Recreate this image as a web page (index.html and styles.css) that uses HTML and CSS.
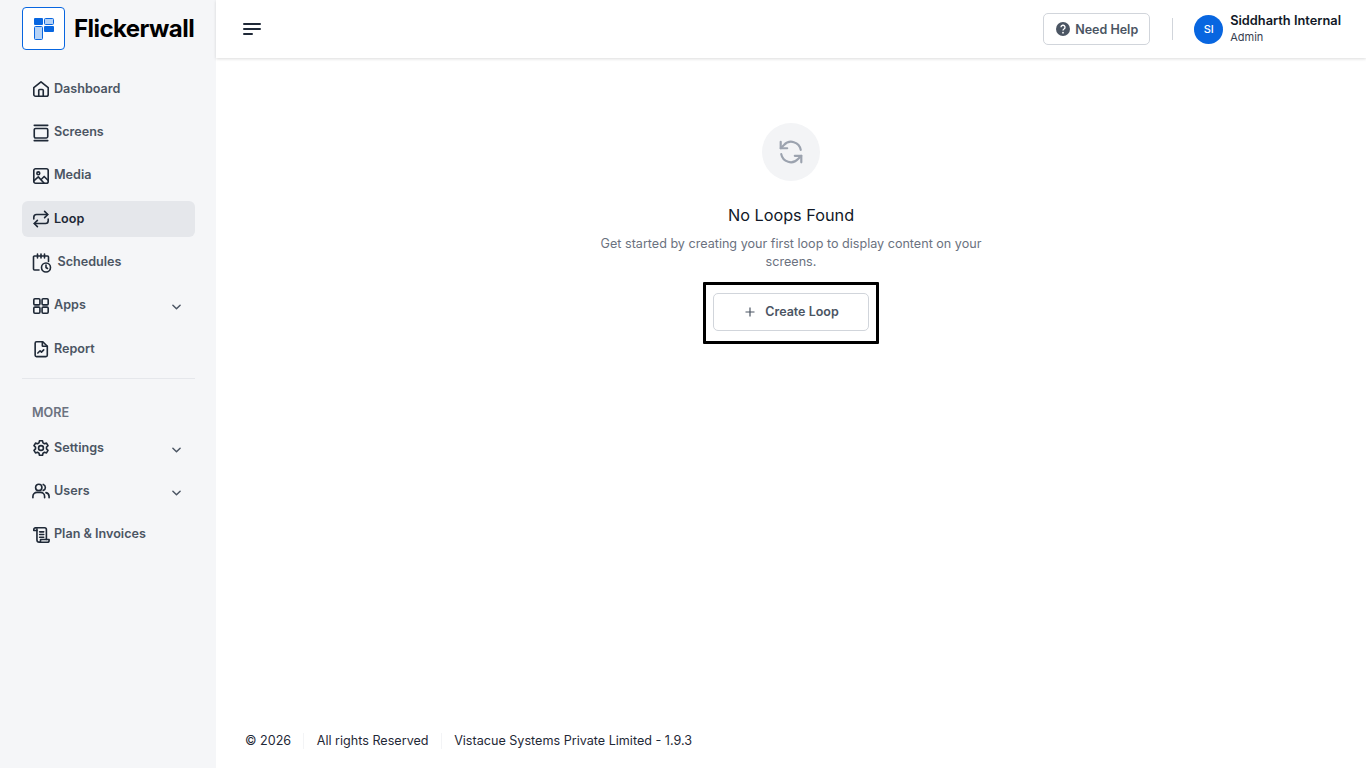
FILE: index.html
```html
<!DOCTYPE html>
<html lang="en">

<head>
    <meta charset="UTF-8">
    <meta name="viewport" content="width=device-width, initial-scale=1.0">
    <title>Flickerwall - Loop</title>
    <link rel="stylesheet" href="styles.css">
</head>

<body>
    <aside class="sidebar">
        <div class="brand">
            <div class="brand-logo">
                <svg width="20" height="22" viewBox="0 0 20 22">
                    <rect x="0" y="0" width="9" height="7" rx="1" fill="#0866e0" />
                    <rect x="0.5" y="8.5" width="8" height="13" rx="1" fill="#b5d2f6" stroke="#0866e0" />
                    <rect x="10.5" y="0.5" width="9" height="6" rx="1" fill="#b5d2f6" stroke="#0866e0" />
                    <rect x="10" y="8" width="10" height="6" rx="1" fill="#0866e0" />
                </svg>
            </div>
            <span class="brand-name">Flickerwall</span>
        </div>

        <nav class="nav">
            <a class="nav-item">
                <svg class="nav-icon" viewBox="0 0 20 20">
                    <path d="M2 8.5 10 2l8 6.500V16a2 2 0 0 1-2 2H4a2 2 0 0 1-2-2z" />
                    <path d="M7.500 18v-6.500a1 1 0 0 1 1-1h3a1 1 0 0 1 1 1V18" />
                </svg>
                <span>Dashboard</span>
            </a>
            <a class="nav-item">
                <svg class="nav-icon" viewBox="0 0 20 20">
                    <path d="M2.500 1.500h15" />
                    <rect x="2.500" y="5" width="15" height="10.500" rx="1.500" />
                    <path d="M2.500 18.500h15" />
                </svg>
                <span>Screens</span>
            </a>
            <a class="nav-item">
                <svg class="nav-icon" viewBox="0 0 20 20">
                    <rect x="2" y="2" width="16" height="16" rx="2" />
                    <circle cx="7" cy="7" r="1.600" />
                    <path d="m2 15.500 5-4.500 6.500 7M11 13l2.500-2.500 4.500 4.500" />
                </svg>
                <span>Media</span>
            </a>
            <a class="nav-item active">
                <svg class="nav-icon" viewBox="0 0 20 20">
                    <path d="M14 1.500l3.500 3.500L14 8.500" />
                    <path d="M2 10V8a3 3 0 0 1 3-3h12.500" />
                    <path d="M6 18.500 2.500 15 6 11.500" />
                    <path d="M18 10v2a3 3 0 0 1-3 3H2.500" />
                </svg>
                <span>Loop</span>
            </a>
            <a class="nav-item wide-icon">
                <svg class="nav-icon" viewBox="0 0 20 20">
                    <path d="M7 17H2.500a1 1 0 0 1-1-1V4a1 1 0 0 1 1-1h13a1 1 0 0 1 1 1v4.500" />
                    <path d="M5.500 1v4M9 1v4M12.500 1v4" />
                    <circle cx="14" cy="14.500" r="4.500" />
                    <path d="M14 12v2.500l1.500 1" />
                </svg>
                <span>Schedules</span>
            </a>
            <a class="nav-item">
                <svg class="nav-icon" viewBox="0 0 20 20">
                    <rect x="2" y="2" width="6.800" height="6.800" rx="1.200" />
                    <rect x="11.200" y="2" width="6.800" height="6.800" rx="1.200" />
                    <rect x="2" y="11.200" width="6.800" height="6.800" rx="1.200" />
                    <rect x="11.200" y="11.200" width="6.800" height="6.800" rx="1.200" />
                </svg>
                <span>Apps</span>
                <svg class="chevron" viewBox="0 0 10 6">
                    <path d="M1 1l4 4 4-4" />
                </svg>
            </a>
            <a class="nav-item">
                <svg class="nav-icon" viewBox="0 0 20 20">
                    <path d="M3.500 3.500A1.500 1.500 0 0 1 5 2h7l5 5v10a1.500 1.500 0 0 1-1.500 1.500H5A1.500 1.500 0 0 1 3.500 17z" />
                    <path d="M11.500 2v4.500a.5.5 0 0 0 .5.5h5" />
                    <path d="m6.500 14.500 2.500-2.500 1.500 1.500 2.500-2.500" />
                </svg>
                <span>Report</span>
            </a>
        </nav>

        <div class="nav-divider"></div>
        <div class="nav-heading">MORE</div>

        <nav class="nav">
            <a class="nav-item">
                <svg class="nav-icon" viewBox="0 0 20 20">
                    <path d="M8.300 2h3.400l.5 2.300 1.700 1 2.200-.7 1.700 2.900-1.700 1.600v1.900l1.700 1.600-1.700 2.900-2.200-.7-1.700 1-.5 2.200H8.300l-.5-2.200-1.700-1-2.200.7-1.700-2.900 1.700-1.600V9.100L2.200 7.500l1.700-2.900 2.200.7 1.700-1z" />
                    <circle cx="10" cy="10" r="2.700" />
                </svg>
                <span>Settings</span>
                <svg class="chevron" viewBox="0 0 10 6">
                    <path d="M1 1l4 4 4-4" />
                </svg>
            </a>
            <a class="nav-item">
                <svg class="nav-icon" viewBox="0 0 20 20">
                    <circle cx="7.500" cy="6" r="3.500" />
                    <path d="M1 17.500V16a4.500 4.500 0 0 1 4.500-4.500h4A4.500 4.500 0 0 1 14 16v1.500" />
                    <path d="M12.500 2.700a3.500 3.500 0 0 1 0 6.600" />
                    <path d="M15.500 11.800a4.500 4.500 0 0 1 3.500 4.200v1.500" />
                </svg>
                <span>Users</span>
                <svg class="chevron" viewBox="0 0 10 6">
                    <path d="M1 1l4 4 4-4" />
                </svg>
            </a>
            <a class="nav-item">
                <svg class="nav-icon" viewBox="0 0 20 20">
                    <path d="M4 2h10a2 2 0 0 1 2 2v11" />
                    <path d="M4 2a2 2 0 0 0-2 2v1h3.500" />
                    <path d="M5.500 3v12.500a2.500 2.500 0 0 0 2.500 2.500h9a2 2 0 0 0 2-2v-1H9.500v1a2 2 0 0 1-2 2" />
                    <path d="M8.500 6.500h4.500M8.500 9.500h4.500M8.500 12.500h4.500" />
                </svg>
                <span>Plan &amp; Invoices</span>
            </a>
        </nav>
    </aside>

    <div class="main">
        <header class="topbar">
            <button class="menu-btn" type="button" aria-label="Toggle menu">
                <svg width="18" height="14" viewBox="0 0 18 14">
                    <path d="M1 2h16M1 7h16M1 12h8" />
                </svg>
            </button>
            <div class="topbar-right">
                <button class="help-btn" type="button">
                    <svg width="14" height="14" viewBox="0 0 14 14">
                        <circle cx="7" cy="7" r="7" fill="#4b5563" />
                        <path d="M5 5.300a2 2 0 1 1 3 1.700c-.7.400-1 .7-1 1.500" fill="none" stroke="#fff" stroke-width="1.400" />
                        <circle cx="7" cy="10.700" r=".9" fill="#fff" />
                    </svg>
                    Need Help
                </button>
                <div class="topbar-sep"></div>
                <div class="user">
                    <div class="avatar">SI</div>
                    <div>
                        <div class="user-name">Siddharth Internal</div>
                        <div class="user-role">Admin</div>
                    </div>
                </div>
            </div>
        </header>

        <main class="content">
            <div class="empty">
                <div class="empty-icon">
                    <svg width="26" height="26" viewBox="0 0 24 24">
                        <path d="M21 10a9 9 0 0 0-15.500-4.500L2.500 8.500" />
                        <path d="M2.500 2.500v6h6" />
                        <path d="M3 14a9 9 0 0 0 15.500 4.500l3-3" />
                        <path d="M21.500 21.500v-6h-6" />
                    </svg>
                </div>
                <h2 class="empty-title">No Loops Found</h2>
                <p class="empty-text">Get started by creating your first loop to display content on your screens.</p>
                <div class="highlight">
                    <button class="create-btn" type="button">
                        <svg width="10" height="10" viewBox="0 0 10 10">
                            <path d="M5 .5v9M.5 5h9" />
                        </svg>
                        Create Loop
                    </button>
                </div>
            </div>
        </main>

        <footer class="footer">
            <span>© 2026</span>
            <span>All rights Reserved</span>
            <span>Vistacue Systems Private Limited - 1.9.3</span>
        </footer>
    </div>
</body>

</html>
```

FILE: styles.css
```css
* {
    box-sizing: border-box;
}

body {
    margin: 0;
    height: 768px;
    display: flex;
    overflow: hidden;
    font-family: Inter, "Noto Sans", sans-serif;
    background: #fff;
    color: #111827;
}

.sidebar {
    width: 216px;
    flex-shrink: 0;
    padding: 7px 21px 0 22px;
    background: #f5f6f8;
}

.brand {
    display: flex;
    align-items: center;
    gap: 9px;
    height: 43px;
    margin-bottom: 21.4px;
}

.brand-logo {
    width: 43px;
    height: 43px;
    display: flex;
    align-items: center;
    justify-content: center;
    background: #fff;
    border: 1px solid #0866e0;
    border-radius: 4px;
}

.brand-name {
    font-size: 24px;
    font-weight: 700;
    letter-spacing: -0.55px;
    color: #000;
}

.nav {
    display: flex;
    flex-direction: column;
    gap: 7.3px;
}

.nav-item {
    height: 36px;
    display: flex;
    align-items: center;
    gap: 4px;
    padding: 0 10px;
    border-radius: 6px;
    font-size: 12.6px;
    font-weight: 600;
    color: #4b5563;
}

.nav-item span {
    position: relative;
    top: -1px;
}

.nav-item.active {
    background: #e5e7eb;
    color: #1f2937;
}

.nav-item.wide-icon {
    gap: 5.5px;
}

.nav-item.wide-icon .nav-icon {
    width: 20px;
    height: 20px;
    stroke-width: 1.6;
}

.nav-icon {
    width: 18px;
    height: 18px;
    flex-shrink: 0;
    fill: none;
    stroke: #1f2937;
    stroke-width: 1.8;
    stroke-linecap: round;
    stroke-linejoin: round;
}

.chevron {
    width: 9px;
    height: 6px;
    margin-left: auto;
    margin-right: 4px;
    margin-top: 3px;
    fill: none;
    stroke: #4b5563;
    stroke-width: 1.6;
    stroke-linecap: round;
    stroke-linejoin: round;
}

.nav-divider {
    height: 1px;
    margin-top: 11px;
    background: #e5e7eb;
}

.nav-heading {
    margin: 26px 0 9px 10px;
    font-size: 12.6px;
    line-height: 16px;
    font-weight: 600;
    color: #6b7280;
}

.main {
    flex: 1;
    min-width: 0;
    display: flex;
    flex-direction: column;
}

.topbar {
    height: 58px;
    flex-shrink: 0;
    display: flex;
    align-items: center;
    justify-content: space-between;
    padding: 0 25px 0 27px;
    background: #fff;
    box-shadow: 0 1px 3px rgba(0, 0, 0, 0.14);
}

.menu-btn {
    padding: 0;
    display: flex;
    background: none;
    border: none;
}

.menu-btn svg {
    fill: none;
    stroke: #1f2937;
    stroke-width: 2;
    stroke-linecap: round;
}

.topbar-right {
    display: flex;
    align-items: center;
}

.help-btn {
    height: 32px;
    display: flex;
    align-items: center;
    gap: 5px;
    padding: 0 11px 0 12px;
    background: #fff;
    border: 1px solid #d1d5db;
    border-radius: 5px;
    font-family: inherit;
    font-size: 12.5px;
    font-weight: 600;
    color: #4b5563;
}

.topbar-sep {
    width: 1px;
    height: 22px;
    margin: 0 21px 0 22px;
    background: #d1d5db;
}

.user {
    display: flex;
    align-items: center;
    gap: 7px;
}

.avatar {
    width: 29px;
    height: 29px;
    display: flex;
    align-items: center;
    justify-content: center;
    border-radius: 50%;
    background: #0866e0;
    font-size: 11px;
    font-weight: 500;
    color: #fff;
}

.user-name {
    font-size: 12.8px;
    line-height: 16px;
    font-weight: 600;
    color: #111827;
}

.user-role {
    margin-top: 0;
    font-size: 11px;
    line-height: 16px;
    color: #374151;
}

.content {
    flex: 1;
    display: flex;
    justify-content: center;
    padding-top: 65px;
}

.empty {
    width: 400px;
    display: flex;
    flex-direction: column;
    align-items: center;
    text-align: center;
}

.empty-icon {
    width: 58px;
    height: 58px;
    display: flex;
    align-items: center;
    justify-content: center;
    border-radius: 50%;
    background: #f3f4f6;
}

.empty-icon svg {
    fill: none;
    stroke: #9ca3af;
    stroke-width: 2;
    stroke-linecap: round;
    stroke-linejoin: round;
}

.empty-title {
    margin: 23px 0 0;
    font-size: 16.25px;
    line-height: 22px;
    font-weight: 400;
    color: #111827;
}

.empty-text {
    margin: 9px 0 0;
    font-size: 12.6px;
    line-height: 18px;
    color: #6b7280;
}

.highlight {
    margin-top: 11px;
    padding: 8px 7px 10px;
    border: 3px solid #000;
    border-radius: 1px;
}

.create-btn {
    width: 156px;
    height: 38px;
    display: flex;
    align-items: center;
    justify-content: center;
    gap: 10px;
    padding: 0 0 1px 2px;
    background: #fff;
    border: 1px solid #d1d5db;
    border-radius: 5px;
    font-family: inherit;
    font-size: 12.5px;
    font-weight: 600;
    color: #4b5563;
}

.create-btn svg {
    fill: none;
    stroke: #4b5563;
    stroke-width: 1.2;
}

.footer {
    height: 56px;
    flex-shrink: 0;
    display: flex;
    padding: 0 29px;
    font-size: 12.6px;
    line-height: 16px;
    color: #1f2937;
}

.footer span {
    height: 16px;
    margin-top: 21px;
    padding: 0 12.3px;
    border-left: 1px solid #f3f4f6;
}

.footer span:first-child {
    padding-left: 0;
    border-left: none;
}
```
